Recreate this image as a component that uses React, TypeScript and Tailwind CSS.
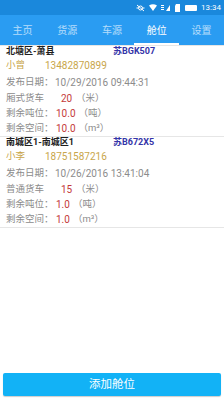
const tabs = ['主页', '货源', '车源', '舱位', '设置']

const items = [
  {
    route: '北塘区-萧县',
    plate: '苏BGK507',
    name: '小曾',
    phone: '13482870899',
    date: '10/29/2016 09:44:31',
    truck: '厢式货车',
    length: '20',
    tons: '10.0',
    space: '10.0',
  },
  {
    route: '南城区1-南城区1',
    plate: '苏B672X5',
    name: '小李',
    phone: '18751587216',
    date: '10/26/2016 13:41:04',
    truck: '普通货车',
    length: '15',
    tons: '1.0',
    space: '1.0',
  },
]

function StatusBar() {
  return (
    <div className="h-[15px] bg-[#1a88dc] flex items-center justify-end gap-[4px] pr-[3px] text-white">
      <svg width="9" height="8" viewBox="0 0 9 8" fill="none" stroke="white" strokeWidth="1">
        <circle cx="4.5" cy="4" r="2" />
        <path d="M1 1l7 6M0.5 4h1.5M7 4h1.5" />
      </svg>
      <svg width="8" height="7" viewBox="0 0 8 7" fill="white">
        <path d="M0 1.5Q4 -1 8 1.5L4 7z" />
      </svg>
      <svg width="10" height="7" viewBox="0 0 10 7" fill="white">
        <rect x="0" y="1" width="3" height="1" />
        <rect x="0" y="3" width="3" height="1" />
        <rect x="0" y="5" width="3" height="1" />
        <path d="M5 7L9 1v6z" />
      </svg>
      <svg width="6" height="8" viewBox="0 0 6 8" fill="white">
        <path d="M1 0h4v8H0V2z" />
      </svg>
      <div className="w-[12px] h-[6px] bg-white rounded-[1px]" />
      <span className="text-[8px] leading-none" style={{ fontFamily: 'Roboto, sans-serif' }}>
        13:34
      </span>
    </div>
  )
}

function Card({ item }: { item: (typeof items)[number] }) {
  return (
    <div className="border-t border-[#e6e6e6] pl-[6px] text-[9.5px]">
      <div className="h-[12px] flex items-center font-bold text-[9px]">
        <span className="w-[107px] text-[#1e1e1e]">{item.route}</span>
        <span className="text-[#3434a8]">{item.plate}</span>
      </div>
      <div className="h-[14px] flex items-center text-[#c9a64a]">
        <span className="w-[39px]">{item.name}</span>
        <span className="text-[10px]">{item.phone}</span>
      </div>
      <div className="mt-[2px] h-[16px] flex items-center text-[#8c8c8c]">
        <span className="w-[49px]">发布日期：</span>
        <span className="text-[10px]">{item.date}</span>
      </div>
      <div className="h-[16px] flex items-center text-[#8c8c8c]">
        <span className="w-[55px]">{item.truck}</span>
        <span className="text-[#c43a3a] w-[13px] text-[10px]">{item.length}</span>
        <span className="ml-[2px]">（米）</span>
      </div>
      <div className="h-[15px] flex items-center text-[#8c8c8c]">
        <span className="w-[50px]">剩余吨位：</span>
        <span className="text-[#c43a3a] text-[10px]">{item.tons}</span>
        <span className="ml-[3px]">（吨）</span>
      </div>
      <div className="h-[15px] flex items-center text-[#8c8c8c]">
        <span className="w-[50px]">剩余空间：</span>
        <span className="text-[#c43a3a] text-[10px]">{item.space}</span>
        <span className="ml-[3px]">（m³）</span>
      </div>
    </div>
  )
}

export default function App() {
  return (
    <div
      className="w-[224px] h-[400px] bg-white flex flex-col"
      style={{ fontFamily: 'Roboto, "Noto Sans CJK SC", sans-serif' }}
    >
      <StatusBar />
      <div className="h-[30px] bg-[#2a9cf2] grid grid-cols-5">
        {tabs.map((t) => (
          <div key={t} className="relative flex items-center justify-center">
            <span className={t === '舱位' ? 'text-[10px] text-white' : 'text-[10px] text-white/65'}>{t}</span>
            {t === '舱位' && <div className="absolute bottom-0 left-0 right-0 h-[2px] bg-white" />}
          </div>
        ))}
      </div>
      {items.map((item) => (
        <Card key={item.plate} item={item} />
      ))}
      <div className="border-t border-[#e6e6e6]" />
      <div className="flex-1" />
      <div className="px-[3px] pb-[4px]">
        <button className="w-full h-[23px] bg-[#12b2f6] rounded-[2px] text-white text-[11.5px] shadow-[0_1px_1px_rgba(0,0,0,0.2)]">
          添加舱位
        </button>
      </div>
    </div>
  )
}
